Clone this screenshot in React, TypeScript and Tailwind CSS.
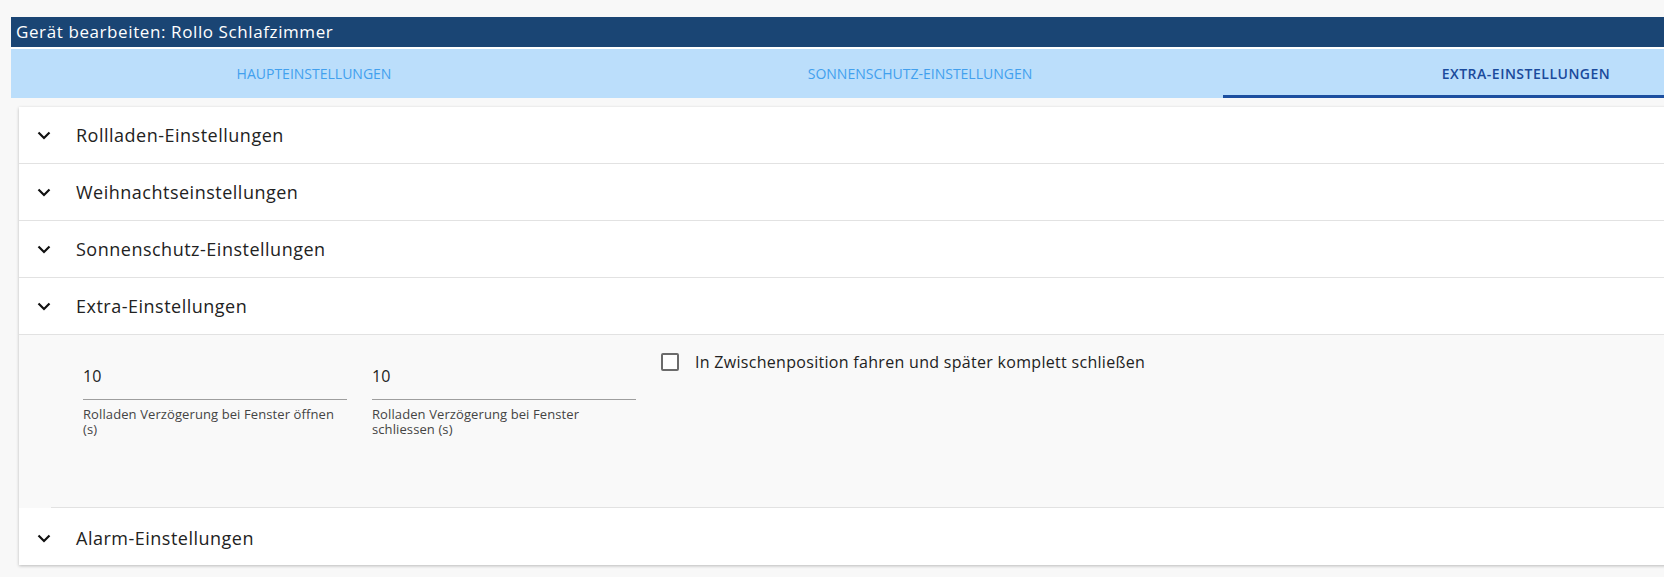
const font = { fontFamily: '"Open Sans", "DejaVu Sans", sans-serif' }

const tabs = [
  { label: 'Haupteinstellungen', active: false },
  { label: 'Sonnenschutz-Einstellungen', active: false },
  { label: 'Extra-Einstellungen', active: true },
]

function Chevron() {
  return (
    <svg width="14" height="9" viewBox="0 0 14 9" className="shrink-0">
      <path d="M1.5 1.5 L7 7 L12.5 1.5" fill="none" stroke="#111" strokeWidth="2.2" />
    </svg>
  )
}

function SectionHeader({ title, last }: { title: string; last?: boolean }) {
  return (
    <div className={`flex h-[57px] items-center ${last ? 'pt-[3px]' : 'border-b border-[#e2e2e2]'}`}>
      <div className="flex w-[57px] justify-start pl-[18px]">
        <Chevron />
      </div>
      <span className="text-[18px] tracking-[0.5px] text-[#222]">{title}</span>
    </div>
  )
}

function NumberField({ value, label }: { value: string; label: string }) {
  return (
    <div className="w-[264px]">
      <div className="flex h-[35px] items-end border-b border-[#9e9e9e] pb-[11px] text-[16px] leading-[24px] text-[#222]">
        {value}
      </div>
      <div className="mt-[7px] text-[13px] leading-[15px] tracking-[0.1px] text-[#444]">{label}</div>
    </div>
  )
}

export default function App() {
  return (
    <div className="h-[577px] w-[1664px] overflow-hidden bg-[#f8f8f8]" style={font}>
      <div className="ml-[11px] w-[1830px] pt-[17px]">
        {/* Title bar */}
        <div className="h-[30px] bg-[#1a4574] px-[5px] text-[17px] font-medium leading-[30px] tracking-[0.6px] text-white">
          Gerät bearbeiten: Rollo Schlafzimmer
        </div>
        <div className="h-[2px] bg-white" />

        {/* Tabs */}
        <div className="grid h-[49px] grid-cols-[606px_606px_606px] bg-[#bbdefb]">
          {tabs.map((t) => (
            <div
              key={t.label}
              className={`flex items-center justify-center text-[14px] uppercase ${
                t.active
                  ? 'border-b-[3px] border-[#1c4fa0] pt-[3px] font-semibold tracking-[0.5px] text-[#1a4a9c]'
                  : 'text-[#42a0ee]'
              }`}
            >
              {t.label}
            </div>
          ))}
        </div>

        {/* Accordion panel */}
        <div className="ml-[8px] mt-[9px] bg-white shadow-[0_1px_3px_rgba(0,0,0,0.25)]">
          <SectionHeader title="Rollladen-Einstellungen" />
          <SectionHeader title="Weihnachtseinstellungen" />
          <SectionHeader title="Sonnenschutz-Einstellungen" />
          <SectionHeader title="Extra-Einstellungen" />

          <div className="bg-[#f9f9f9]">
            <div className="flex h-[172px] gap-[25px] pl-[64px] pt-[30px]">
              <NumberField value="10" label="Rolladen Verzögerung bei Fenster öffnen (s)" />
              <NumberField value="10" label="Rolladen Verzögerung bei Fenster schliessen (s)" />
              <label className="-mt-[12px] flex h-[18px] items-center gap-[16px] text-[16px] tracking-[0.3px] text-[#222]">
                <span className="h-[18px] w-[18px] rounded-[2px] border-2 border-[#6b6b6b] bg-white" />
                In Zwischenposition fahren und später komplett schließen
              </label>
            </div>
            <div className="ml-[32px] border-t border-[#e2e2e2]" />
          </div>

          <div className="bg-white">
            <SectionHeader title="Alarm-Einstellungen" last />
          </div>
        </div>
      </div>
    </div>
  )
}
